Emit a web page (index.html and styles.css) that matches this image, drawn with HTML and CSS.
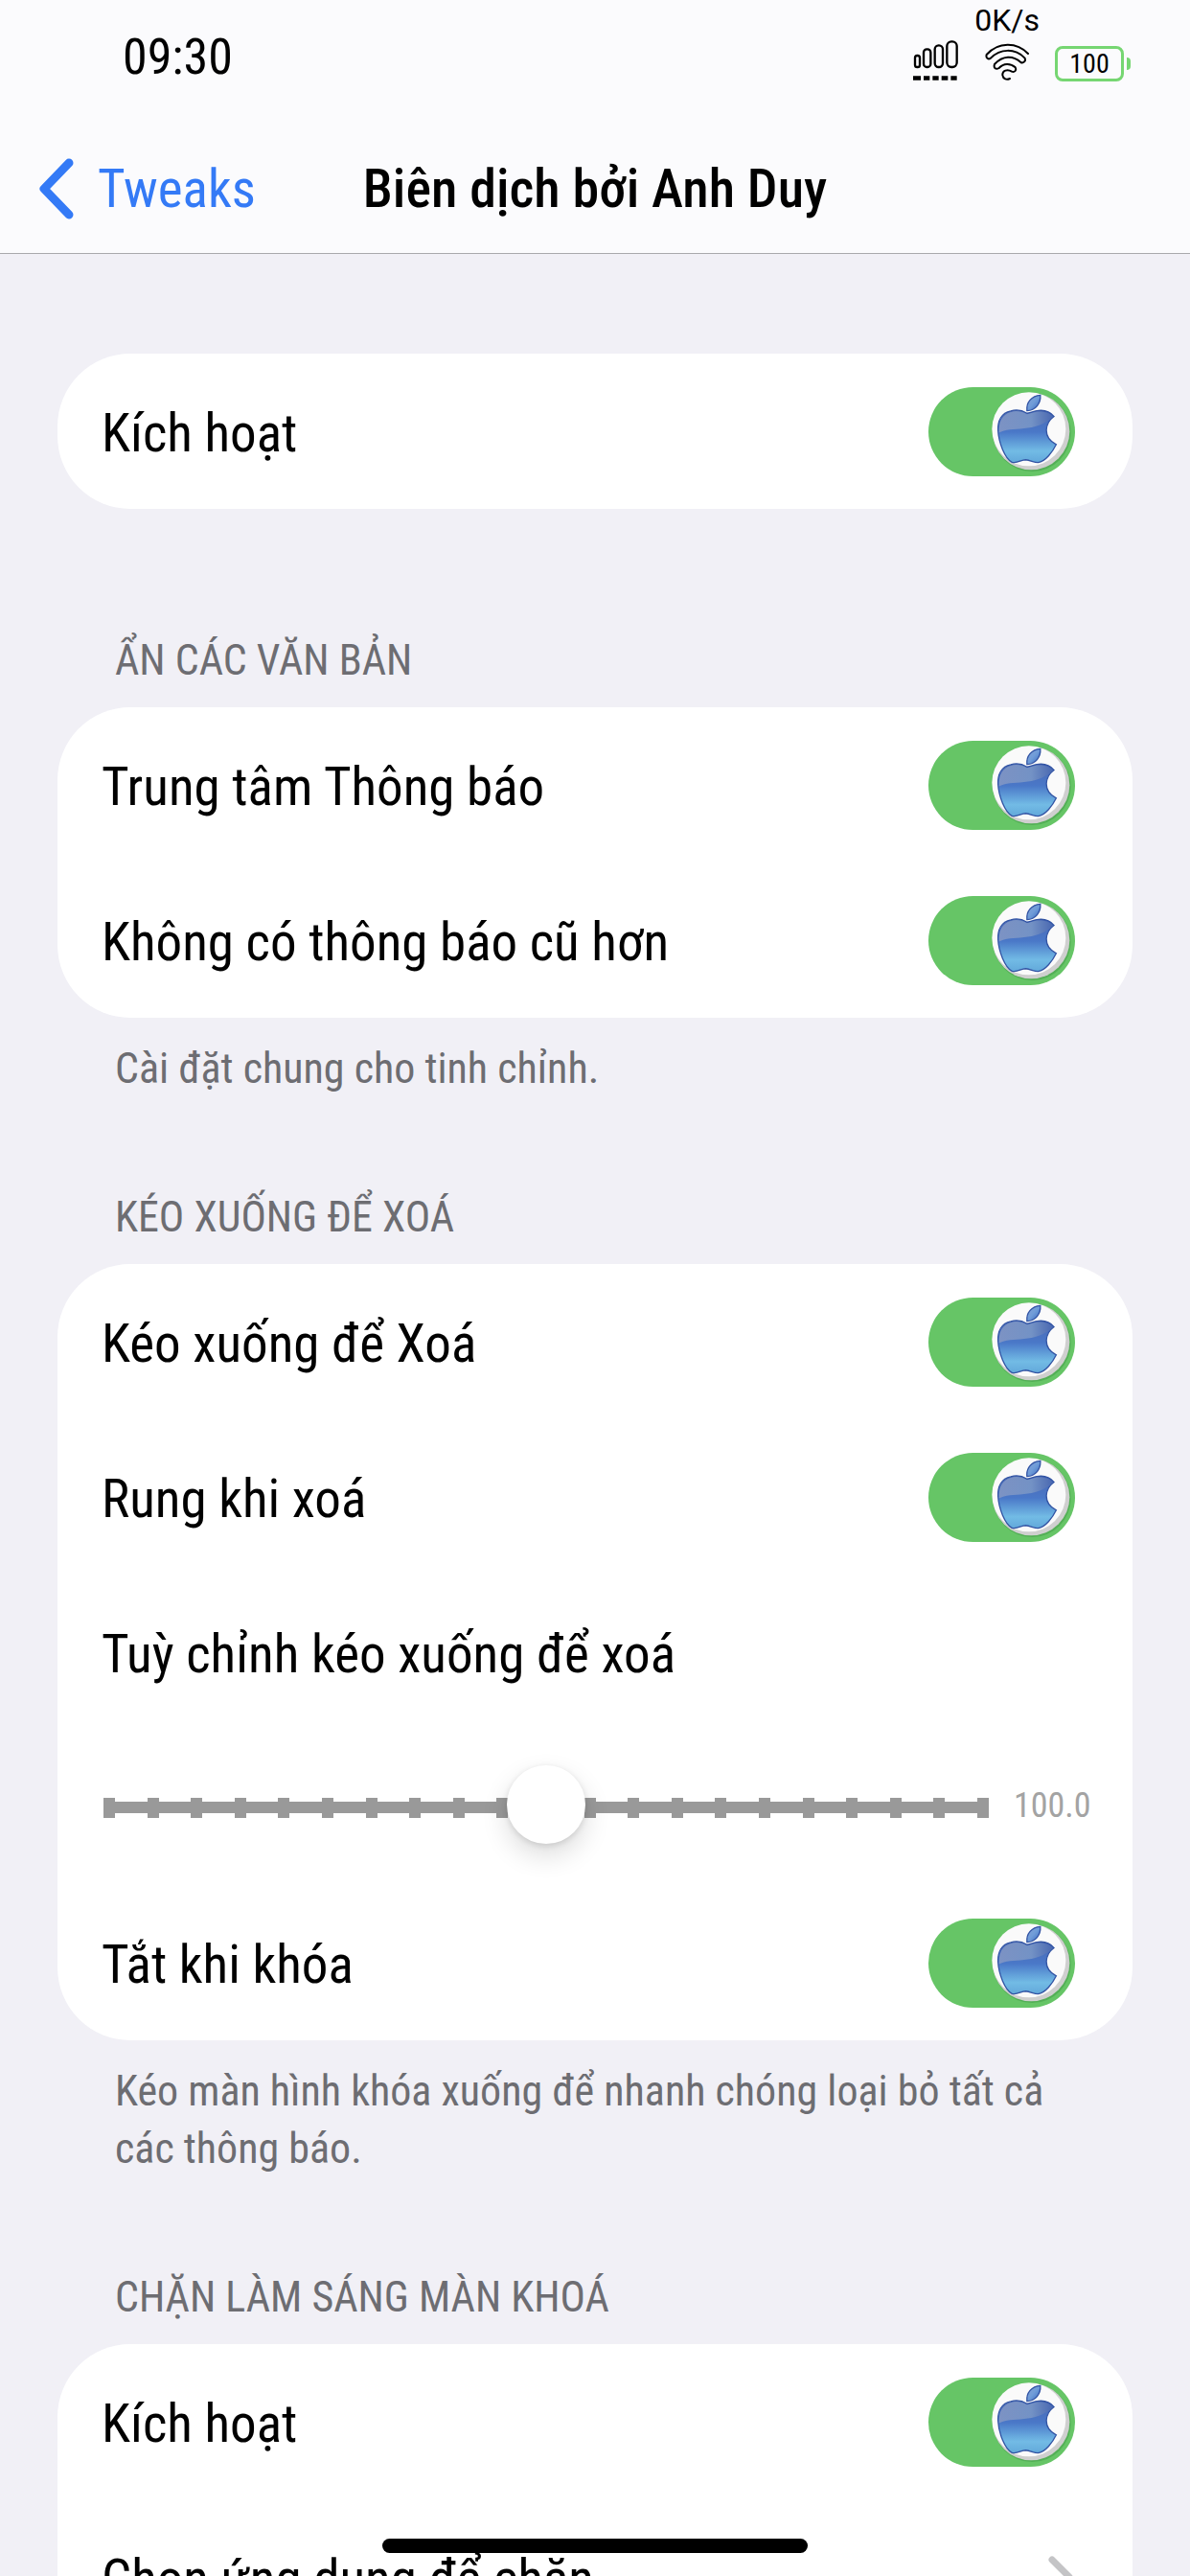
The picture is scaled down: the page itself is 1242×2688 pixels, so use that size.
FILE: index.html
```html
<!DOCTYPE html>
<html lang="vi">
<head>
<meta charset="utf-8">
<meta name="viewport" content="width=device-width, initial-scale=1">
<title>Biên dịch bởi Anh Duy</title>
<link rel="stylesheet" href="styles.css">
</head>
<body>
<svg class="symbols" width="0" height="0" aria-hidden="true">
  <defs>
    <linearGradient id="apple-body" x1="0" y1="0" x2="0" y2="1">
      <stop offset="0" stop-color="#4a68b4"/>
      <stop offset="0.42" stop-color="#4a78c8"/>
      <stop offset="0.78" stop-color="#72bbe5"/>
      <stop offset="1" stop-color="#62a8da"/>
    </linearGradient>
    <linearGradient id="apple-gloss" x1="0" y1="0" x2="1" y2="0">
      <stop offset="0" stop-color="#8296c4"/>
      <stop offset="0.6" stop-color="#7896c6"/>
      <stop offset="1" stop-color="#4a68b0"/>
    </linearGradient>
    <linearGradient id="apple-leaf" x1="0" y1="0" x2="1" y2="1">
      <stop offset="0" stop-color="#86a4d6"/>
      <stop offset="0.5" stop-color="#6f9cd8"/>
      <stop offset="1" stop-color="#3767bd"/>
    </linearGradient>
    <clipPath id="apple-clip">
      <path d="M111 67C95 57 75 55 60 60C30 66 19 92 20 120C22 160 42 210 64 221C80 226 92 213 107 213C122 214 132 222 146 222C170 218 192 187 203 165C182 155 172 140 172 120C173 100 182 87 196 77C182 60 160 56 142 59C130 61 118 67 111 67Z"/>
    </clipPath>
  </defs>
  <symbol id="knob" viewBox="0 0 250 250">
    <circle cx="127" cy="128" r="122" fill="#3f9a45" opacity="0.5"/>
    <circle cx="124" cy="124" r="121" fill="#cfcfcf"/>
    <ellipse cx="117" cy="117" rx="116" ry="116" fill="#fafafa"/>
    <path fill="url(#apple-body)" stroke="#3254a4" stroke-width="4" d="M111 67C95 57 75 55 60 60C30 66 19 92 20 120C22 160 42 210 64 221C80 226 92 213 107 213C122 214 132 222 146 222C170 218 192 187 203 165C182 155 172 140 172 120C173 100 182 87 196 77C182 60 160 56 142 59C130 61 118 67 111 67Z"/>
    <path clip-path="url(#apple-clip)" fill="url(#apple-gloss)" opacity="0.9" d="M23 128C60 106 140 130 192 78C180 64 160 60 142 62C130 64 118 70 111 70C95 60 75 58 60 63C34 70 22 92 23 128Z"/>
    <path fill="url(#apple-leaf)" stroke="#3254a4" stroke-width="4" d="M111 59C108 32 126 12 153 10C155 36 138 58 111 59Z"/>
  </symbol>
</svg>

<div class="screen">
  <header class="topbar">
    <div class="status">
      <time class="clock">09:30</time>
      <div class="indicators">
        <svg class="signal" viewBox="0 0 144 129" aria-hidden="true">
          <g fill="none" stroke="#000" stroke-width="7">
            <rect x="6" y="48" width="15" height="36" rx="7"/>
            <rect x="33" y="28" width="22" height="56" rx="10"/>
            <rect x="68" y="16" width="25" height="68" rx="12"/>
            <rect x="106" y="4" width="31" height="80" rx="14"/>
          </g>
          <path d="M0 112h24v13H0zM33 112h19v13H33zM61 112h19v13H61zM89 112h20v13H89zM118 112h19v13h-19z"/>
        </svg>
        <div class="network">
          <span>0K/s</span>
          <svg class="wifi" viewBox="0 0 141 120" aria-hidden="true">
            <path fill="none" stroke="#000" stroke-width="6" stroke-linecap="round" d="M135 33C100 -4 42 -5 5 36C2 46 10 53 18 47C48 16 94 16 124 46C130 56 120 64 112 60C88 38 56 38 30 66C26 78 34 84 44 78C58 62 80 62 95 76C100 86 92 92 84 89C70 80 54 86 55 100C57 113 68 116 78 111"/>
          </svg>
        </div>
        <div class="battery"><span class="battery-level">100</span></div>
      </div>
    </div>
    <nav class="nav">
      <a class="back" href="#">
        <svg viewBox="0 0 38 64" aria-hidden="true"><path d="M32 5 6 32 32 59"/></svg>
        <span>Tweaks</span>
      </a>
      <h1>Biên dịch bởi Anh Duy</h1>
    </nav>
  </header>

  <main class="settings">
    <section class="group">
      <div class="card">
        <label class="row"><span class="name">Kích hoạt</span><span class="switch"><input type="checkbox" role="switch" checked><svg aria-hidden="true"><use href="#knob"/></svg></span></label>
      </div>
    </section>

    <section class="group">
      <h2>ẨN CÁC VĂN BẢN</h2>
      <div class="card">
        <label class="row"><span class="name">Trung tâm Thông báo</span><span class="switch"><input type="checkbox" role="switch" checked><svg aria-hidden="true"><use href="#knob"/></svg></span></label>
        <label class="row"><span class="name">Không có thông báo cũ hơn</span><span class="switch"><input type="checkbox" role="switch" checked><svg aria-hidden="true"><use href="#knob"/></svg></span></label>
      </div>
      <p class="note">Cài đặt chung cho tinh chỉnh.</p>
    </section>

    <section class="group">
      <h2>KÉO XUỐNG ĐỂ XOÁ</h2>
      <div class="card">
        <label class="row"><span class="name">Kéo xuống để Xoá</span><span class="switch"><input type="checkbox" role="switch" checked><svg aria-hidden="true"><use href="#knob"/></svg></span></label>
        <label class="row"><span class="name">Rung khi xoá</span><span class="switch"><input type="checkbox" role="switch" checked><svg aria-hidden="true"><use href="#knob"/></svg></span></label>
        <label class="row" for="pull"><span class="name">Tuỳ chỉnh kéo xuống để xoá</span></label>
        <div class="row slider-row">
          <input class="slider" id="pull" type="range" min="0" max="200" step="10" value="100">
          <output for="pull">100.0</output>
        </div>
        <label class="row"><span class="name">Tắt khi khóa</span><span class="switch"><input type="checkbox" role="switch" checked><svg aria-hidden="true"><use href="#knob"/></svg></span></label>
      </div>
      <p class="note">Kéo màn hình khóa xuống để nhanh chóng loại bỏ tất cả các thông báo.</p>
    </section>

    <section class="group">
      <h2>CHẶN LÀM SÁNG MÀN KHOÁ</h2>
      <div class="card">
        <label class="row"><span class="name">Kích hoạt</span><span class="switch"><input type="checkbox" role="switch" checked><svg aria-hidden="true"><use href="#knob"/></svg></span></label>
        <a class="row" href="#"><span class="name">Chọn ứng dụng để chặn</span><svg class="disclosure" viewBox="0 0 28 44" aria-hidden="true"><path d="M4 4 22 22 4 40"/></svg></a>
      </div>
    </section>
  </main>
  <div class="home-indicator"></div>
</div>
</body>
</html>
```
FILE: styles.css
```css
* {
  box-sizing: border-box;
}

body {
  margin: 0;
  background: #f1f0f6;
  color: #000;
  font: 55px/64px "Roboto Condensed", Roboto, sans-serif;
}

h1,
h2,
p {
  margin: 0;
  font-weight: 400;
}

a {
  color: inherit;
  text-decoration: none;
}

.symbols {
  position: absolute;
}

.screen {
  display: flex;
  flex-direction: column;
  height: 100vh;
  overflow: hidden;
}

/* Status bar and navigation */

.topbar {
  flex: none;
  background: #fbfbfd;
  border-bottom: 1px solid #a9a9ac;
}

.status {
  display: flex;
  justify-content: space-between;
  align-items: flex-start;
  height: 132px;
  padding: 5px 62px 0 128px;
}

.clock {
  padding-top: 23px;
  font-size: 52px;
}

.indicators {
  display: flex;
  align-items: flex-end;
  gap: 16px;
}

.signal {
  width: 48px;
  height: 43px;
}

.network {
  display: flex;
  flex-direction: column;
  align-items: center;
  gap: 8px;
  font: 400 32px/32px Roboto, sans-serif;
}

.wifi {
  width: 47px;
  height: 40px;
}

.battery {
  display: flex;
  align-items: center;
  gap: 3px;
}

.battery-level {
  width: 72px;
  height: 37px;
  border: 3px solid #76d672;
  border-radius: 8px;
  font-size: 28px;
  line-height: 32px;
  text-align: center;
}

.battery::after {
  content: "";
  width: 4px;
  height: 13px;
  border-radius: 0 4px 4px 0;
  background: #76d672;
}

.nav {
  display: grid;
  grid-template-columns: 1fr auto 1fr;
  align-items: center;
  height: 132px;
  padding: 0 40px 3px;
}

.nav h1 {
  font-size: 56px;
  font-weight: 500;
}

.back {
  display: flex;
  align-items: center;
  gap: 24px;
  color: #347af6;
}

.back svg {
  width: 38px;
  height: 64px;
}

.back path,
.disclosure path {
  fill: none;
  stroke: currentColor;
  stroke-width: 9;
  stroke-linecap: round;
  stroke-linejoin: round;
}

/* Settings list */

.settings {
  flex: 1;
  min-height: 0;
  padding: 104px 60px;
  overflow-y: auto;
  scrollbar-width: none;
}

.group {
  margin-bottom: 128px;
}

.group:has(.note) {
  margin-bottom: 95px;
}

.group h2,
.note {
  padding: 0 60px;
  color: #6d6d72;
  font-size: 44px;
  line-height: 60px;
}

.group h2 {
  padding-bottom: 19px;
}

.note {
  padding-top: 23px;
}

.card {
  border-radius: 76px;
  background: #fff;
}

.row {
  display: flex;
  align-items: center;
  justify-content: space-between;
  height: 162px;
  padding: 0 60px 0 46px;
}

.name {
  padding-top: 4px;
}

.disclosure {
  width: 28px;
  height: 44px;
  color: #c4c4c6;
}

.disclosure path {
  stroke-width: 7;
}

/* Switch */

.switch {
  display: grid;
  align-items: center;
}

.switch input {
  grid-area: 1 / 1;
  appearance: none;
  width: 153px;
  height: 93px;
  margin: 0;
  border-radius: 47px;
  background: #e9e9eb;
}

.switch input:checked {
  background: #66c566;
}

.switch svg {
  grid-area: 1 / 1;
  width: 83px;
  height: 83px;
  margin: 0 4px;
  pointer-events: none;
}

.switch input:checked + svg {
  justify-self: end;
}

/* Stepped slider */

.slider-row {
  gap: 26px;
  padding: 0 44px 0 48px;
}

.slider {
  flex: 1;
  min-width: 0;
  height: 84px;
  margin: 0;
  appearance: none;
  background:
    linear-gradient(#999, #999) center / 100% 12px no-repeat,
    repeating-linear-gradient(90deg, #999 0 12px, transparent 12px calc((100% - 12px) / 20)) center / 100% 21px no-repeat;
}

.slider::-webkit-slider-thumb {
  appearance: none;
  width: 82px;
  height: 82px;
  margin-bottom: 6px;
  border-radius: 50%;
  background: #fff;
  box-shadow: 0 12px 28px rgba(0, 0, 0, 0.14), 0 2px 6px rgba(0, 0, 0, 0.12);
}

.slider-row output {
  width: 80px;
  padding-bottom: 4px;
  color: #a3a3a3;
  font-size: 36px;
  line-height: 40px;
}

.home-indicator {
  position: fixed;
  bottom: 24px;
  left: 50%;
  width: 444px;
  height: 15px;
  border-radius: 8px;
  background: #000;
  transform: translateX(-50%);
}
```
